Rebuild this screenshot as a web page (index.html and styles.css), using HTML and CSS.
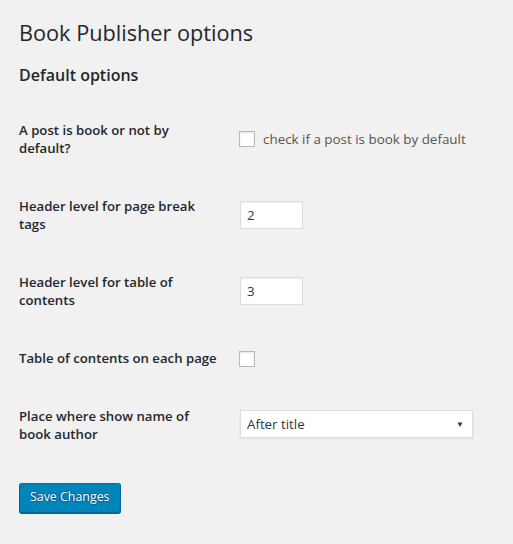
FILE: index.html
```html
<!DOCTYPE html>
<html>
<head>
<meta charset="utf-8">
<link rel="stylesheet" href="styles.css">
</head>
<body>
<div class="wrap">
  <h1 class="title">Book Publisher options</h1>
  <form class="settings">
    <h2 class="section">Default options</h2>
    <table class="form-table">
      <tr>
        <th>A post is book or not by default?</th>
        <td><label class="check"><span class="box"></span>check if a post is book by default</label></td>
      </tr>
      <tr>
        <th>Header level for page break tags</th>
        <td><input class="small" type="text" value="2"></td>
      </tr>
      <tr>
        <th>Header level for table of contents</th>
        <td><input class="small" type="text" value="3"></td>
      </tr>
      <tr>
        <th>Table of contents on each page</th>
        <td><span class="box"></span></td>
      </tr>
      <tr>
        <th>Place where show name of book author</th>
        <td><div class="select"><span>After title</span><span class="arrow">▼</span></div></td>
      </tr>
    </table>
    <p class="submit"><button type="button" class="button">Save Changes</button></p>
  </form>
</div>
</body>
</html>
```
FILE: styles.css
```css
html, body {
  margin: 0;
  padding: 0;
  background: #f1f1f1;
}
body {
  font-family: "Open Sans", "Noto Sans", sans-serif;
  font-size: 13px;
  color: #444;
}
.wrap {
  padding: 10px 20px 0 19px;
}
.title {
  margin: 0;
  padding: 8px 0 4px;
  font-size: 21.7px;
  font-weight: 400;
  line-height: 29px;
  color: #23282d;
}
.section {
  margin: 13px 0 0;
  font-size: 16px;
  font-weight: 600;
  line-height: 22px;
  color: #23282d;
}
.form-table {
  border-collapse: collapse;
  margin-top: 15px;
  width: 100%;
}
.form-table th {
  width: 200px;
  padding: 20px 10px 20px 0;
  text-align: left;
  vertical-align: top;
  font-size: 13.2px;
  font-weight: 600;
  line-height: 18px;
  color: #23282d;
}
.form-table td {
  padding: 15px 10px;
  vertical-align: middle;
  font-size: 13.4px;
  line-height: 18px;
}
.box {
  display: inline-block;
  width: 16px;
  height: 16px;
  box-sizing: border-box;
  border: 1px solid #b4b9be;
  background: #fff;
  box-shadow: inset 0 1px 2px rgba(0,0,0,.1);
  vertical-align: middle;
}
.check {
  display: flex;
  align-items: center;
  gap: 8px;
  color: #555;
}
.small {
  box-sizing: border-box;
  width: 63px;
  height: 28px;
  border: 1px solid #ddd;
  box-shadow: inset 0 1px 2px rgba(0,0,0,.07);
  background: #fff;
  padding: 3px 6px;
  font: 13.4px "Open Sans", sans-serif;
  color: #32373c;
  margin: 0 0 0 1px;
}
.select {
  box-sizing: border-box;
  width: 233px;
  height: 28px;
  margin: -3px 0 0 1px;
  border: 1px solid #ddd;
  box-shadow: 0 1px 2px rgba(0,0,0,.07);
  background: #fff;
  display: flex;
  align-items: center;
  justify-content: space-between;
  padding: 0 8px 0 6px;
  color: #32373c;
  font-size: 13.3px;
}
.arrow {
  font-size: 8px;
  color: #333;
}
.submit {
  margin: 0;
  padding: 20px 0 30px;
}
.button {
  font-family: "Open Sans", sans-serif;
  font-size: 12.4px;
  height: 30px;
  line-height: 26px;
  padding: 0 10px 2px;
  border-radius: 3px;
  border: 1px solid;
  border-color: #0073aa #006799 #006799;
  background: #0085ba;
  box-shadow: 0 1px 0 #006799;
  color: #fff;
  text-shadow: 0 -1px 1px #006799, 1px 0 1px #006799, 0 1px 1px #006799, -1px 0 1px #006799;
}
```
